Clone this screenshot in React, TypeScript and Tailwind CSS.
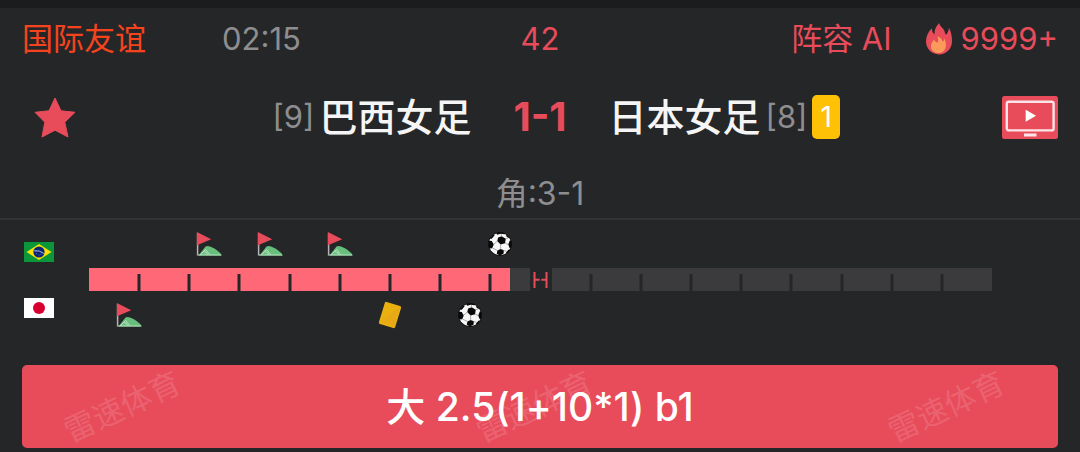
type EventKind = "corner" | "card" | "goal";

interface MatchEvent {
  minute: number;
  kind: EventKind;
}

const MATCH_LENGTH = 90;
const CURRENT_MINUTE = 42;

const homeEvents: MatchEvent[] = [
  { minute: 12, kind: "corner" },
  { minute: 18, kind: "corner" },
  { minute: 25, kind: "corner" },
  { minute: 41, kind: "goal" },
];

const awayEvents: MatchEvent[] = [
  { minute: 4, kind: "corner" },
  { minute: 30, kind: "card" },
  { minute: 38, kind: "goal" },
];

const ticks = [5, 10, 15, 20, 25, 30, 35, 40, 50, 55, 60, 65, 70, 75, 80, 85];

const percent = (minute: number) => `${(minute / MATCH_LENGTH) * 100}%`;

function CornerIcon() {
  return (
    <svg viewBox="0 0 26 24" className="h-6 w-[26px]" role="img" aria-label="角球">
      <path d="M2.5 23.5 9.5 14.6Q11.5 13.4 14 14.6Q22.5 18 26 23.5Z" fill="#68be7c" />
      <path d="M4 22.8 9.8 17.5 13.8 22.8M7.6 19.6Q11 19.4 11.6 22.8M2 23H25" fill="none" stroke="#b9e3c2" strokeWidth="1" />
      <path d="M1.6 1V23.5" stroke="#b4b4b6" strokeWidth="1.5" />
      <path d="M.9 0 15.2 7.2.9 13.2Z" fill="#e84c5b" />
    </svg>
  );
}

function GoalIcon() {
  return (
    <svg viewBox="0 0 24 24" className="size-6" role="img" aria-label="进球">
      <defs>
        <clipPath id="ball">
          <circle cx="12" cy="12" r="11.6" />
        </clipPath>
      </defs>
      <circle cx="12" cy="12" r="11.8" fill="#0a0a0a" />
      <circle cx="12" cy="12" r="11.1" fill="#f7f7f7" />
      <g clipPath="url(#ball)">
        <path d="M13.6 4.2 17.8 6.8 17 11.2 12.6 12.4 9.2 9 10.2 5.4Z" fill="#080808" />
        <path d="M8 0H18L16.6 2.2 12.8 1.8 9 2.8ZM0 8.6 3.8 9 5.8 12.4 4.2 16.2 0 16.4ZM24 8 21.8 8.4 20.2 12.6 21.6 16 24 16ZM9.4 18.4 12.6 17 15.8 18.2 15.6 21.6 12 23.4 8.8 21.8ZM1.8 6.4 4.8 2.8 6.8 3 3.8 6.8ZM17.8 21 20.4 17.8 22 17.8 20 21.6ZM18.4 2.4 21.6 5.4 20.6 6 18.2 4.2Z" fill="#080808" />
        <path d="M13.4 4.4V1.8M17.6 6.8 20.4 5.8M17 11 20.4 12.6M12.6 12.2V17.2M9.4 9 5.6 12.4M9.6 18.5 4.4 16M15.5 18.2 18.6 19.6" fill="none" stroke="#8b8b8b" strokeWidth=".7" />
      </g>
    </svg>
  );
}

function CardIcon() {
  return (
    <svg viewBox="0 0 26 28" className="h-7 w-[26px]" role="img" aria-label="黄牌">
      <rect x="4.5" y="2.5" width="17" height="23" rx="1.5" fill="#eab010" transform="rotate(17 13 14)" />
      <path d="m5.5 19 14-11.5 3-1-5 18.5-12-4z" fill="#e3a51b" opacity=".55" />
    </svg>
  );
}

function EventIcon({ kind }: { kind: EventKind }) {
  if (kind === "corner") return <CornerIcon />;
  if (kind === "goal") return <GoalIcon />;
  return <CardIcon />;
}

function EventRow({ events }: { events: MatchEvent[] }) {
  return (
    <div className="relative h-6">
      {events.map((event) => (
        <span
          key={event.minute}
          className="absolute top-1/2 -translate-x-1/2 -translate-y-1/2"
          style={{ left: percent(event.minute) }}
        >
          <EventIcon kind={event.kind} />
        </span>
      ))}
    </div>
  );
}

function BrazilFlag() {
  return (
    <svg viewBox="0 0 30 20" className="h-5 w-[30px]" role="img" aria-label="巴西">
      <path d="M0 0H30V20H0Z" fill="#0a9739" />
      <path d="M15 2 27.5 10 15 18 2.5 10Z" fill="#fbdf05" />
      <circle cx="15" cy="10" r="5.6" fill="#06247a" />
      <path d="M10.2 8.8Q15.5 8 19.8 11.4" fill="none" stroke="#dce7ee" strokeWidth=".8" />
      <path d="M12 11.5h1M14.5 13h1M16.5 12.2h1" stroke="#8ba0cf" strokeWidth=".6" />
    </svg>
  );
}

function JapanFlag() {
  return (
    <svg viewBox="0 0 30 20" className="h-5 w-[30px]" role="img" aria-label="日本">
      <path d="M0 0H30V20H0Z" fill="#fff" />
      <circle cx="15" cy="10" r="6" fill="#d8002f" />
    </svg>
  );
}

function FireIcon() {
  return (
    <svg viewBox="0 0 26 32" className="h-8 w-[26px]" aria-hidden="true">
      <path
        d="M13.2 0C9.6 3.4 8.4 7.2 8.4 11.6 6.8 10 6 8 5.8 5.2 2 8.9 0 13.6 0 18.6 0 26 5.8 31.4 13 31.4S26 26 26 18.2C26 13 24.9 8.4 23 4.8 22.6 8 21.7 10.2 20 11.8 18.8 10.4 18.8 8.6 17.8 6.8 16.6 4.6 13.6 3.2 13.2 0Z"
        fill="#e84c5b"
      />
      <path
        d="M11.4 13.2C12.6 16.2 12.2 17.8 11.6 19.6 9.8 19.2 8.6 18 8 16.4 5.8 19 4.8 21.2 4.9 23.6 5.1 28 8.2 30 12 30 16.6 30 19.6 27.2 19.8 23.2 19.9 20.6 19.5 18 18.6 15.6 18.2 17.2 17.6 18 16.6 18.8 16 16 14.4 14.2 11.4 13.2Z"
        fill="#fb9a5b"
      />
    </svg>
  );
}

function StarIcon() {
  return (
    <svg viewBox="0 0 42 41" className="h-[41px] w-[42px]" aria-hidden="true">
      <path
        d="M21 1 27 13.8 41 15.3 30.8 25.2 34 40 21 33.2 8 40 10.8 25.2 1 15.3 15 13.8Z"
        fill="#e84c5b"
        stroke="#e84c5b"
        strokeWidth="1"
        strokeLinejoin="round"
      />
    </svg>
  );
}

function LiveIcon() {
  return (
    <svg viewBox="0 0 56 43" className="h-[43px] w-14" aria-hidden="true">
      <rect width="56" height="43" rx="2.5" fill="#e84c5b" />
      <rect x="4.8" y="5.8" width="46.8" height="28.6" rx="2" fill="none" stroke="#fbe4e7" strokeWidth="2.4" />
      <path d="M23.7 13.8 34 19.8 23.7 25.8Z" fill="#fff" />
      <path d="M22 39H34.5" stroke="#fbe4e7" strokeWidth="3" />
    </svg>
  );
}

function HalfTimeMark() {
  return (
    <svg viewBox="0 0 22 23" className="h-[23px] w-[22px]" role="img" aria-label="中场">
      <path d="M4.5 4V20M16.5 4V20M4.5 11.8H9.7M11.3 11.8H16.5" fill="none" stroke="#e84c5b" strokeWidth="2" />
    </svg>
  );
}

function ProgressBar() {
  return (
    <div
      className="relative h-[23px] bg-[#3b3b3d]"
      role="progressbar"
      aria-label="比赛时间"
      aria-valuemin={0}
      aria-valuemax={MATCH_LENGTH}
      aria-valuenow={CURRENT_MINUTE}
    >
      <div className="h-full bg-[#ff6877]" style={{ width: percent(CURRENT_MINUTE) }} />
      {ticks.map((minute) => (
        <span
          key={minute}
          className="absolute bottom-0 h-[17px] w-[3px] -translate-x-1/2 bg-[#252628]"
          style={{ left: percent(minute) }}
        />
      ))}
      <span className="absolute top-0 left-1/2 -translate-x-1/2 bg-[#252628]">
        <HalfTimeMark />
      </span>
    </div>
  );
}

export default function App() {
  return (
    <main className="min-h-screen border-t-8 border-[#1b1c1e] bg-[#252628] pb-1 font-['Inter','Noto_Sans_CJK_SC',sans-serif] text-[#8e8e90]">
      <header className="grid grid-cols-[1fr_auto_1fr] items-center px-[22px] pt-2 text-[31px] leading-[46px]">
        <div className="flex gap-[76px]">
          <a href="#league" className="text-[#f5441d]">国际友谊</a>
          <time>02:15</time>
        </div>
        <span className="text-[#e84c5b]">42</span>
        <div className="flex items-center justify-end gap-[34px] text-[#e84c5b]">
          <a href="#lineup">阵容 AI</a>
          <span className="flex items-center gap-[9px]">
            <FireIcon />
            9999+
          </span>
        </div>
      </header>

      <section className="grid grid-cols-[1fr_auto_1fr] items-center gap-[42px] px-[22px] pt-[26px] leading-[58px]">
        <div className="flex items-center justify-between">
          <button type="button" aria-label="收藏" className="pl-3">
            <StarIcon />
          </button>
          <div className="flex items-center gap-[5px]">
            <span className="text-[31px]">[9]</span>
            <h2 className="text-[38px] font-medium text-[#f5f5f5]">巴西女足</h2>
          </div>
        </div>
        <strong className="text-[40px] font-bold text-[#e84c5b]">1-1</strong>
        <div className="flex items-center justify-between">
          <div className="flex items-center gap-[5px]">
            <h2 className="text-[38px] font-medium text-[#f5f5f5]">日本女足</h2>
            <span className="text-[31px]">[8]</span>
            <span className="rounded-[5px] bg-[#ffc105] px-2 text-[28px] leading-[44px] text-white">1</span>
          </div>
          <button type="button" aria-label="视频直播">
            <LiveIcon />
          </button>
        </div>
      </section>

      <p className="border-b-2 border-[#323335] pt-[26px] pb-0.5 text-center text-[32px] leading-[44px]">
        角:3-1
      </p>

      <section className="flex items-center gap-[35px] pt-3 pr-[88px] pl-6" aria-label="比赛进程">
        <div className="flex flex-col gap-9">
          <BrazilFlag />
          <JapanFlag />
        </div>
        <div className="flex grow flex-col gap-3">
          <EventRow events={homeEvents} />
          <ProgressBar />
          <EventRow events={awayEvents} />
        </div>
      </section>

      <div className="px-[22px] pt-[38px]">
        <button
          type="button"
          className="relative block w-full overflow-hidden rounded-[5px] bg-[#e84c5b] text-[39px] leading-[83px] font-medium text-white"
        >
          <span className="[font-feature-settings:'calt'_0]">大 2.5(1+10*1) b1</span>
          <span
            aria-hidden="true"
            className="pointer-events-none absolute inset-0 flex justify-between pr-[50px] pl-[38px] text-[31px] font-normal text-white/15"
          >
            <span className="-rotate-[25deg]">雷速体育</span>
            <span className="-rotate-[25deg]">雷速体育</span>
            <span className="-rotate-[25deg]">雷速体育</span>
          </span>
        </button>
      </div>
    </main>
  );
}
